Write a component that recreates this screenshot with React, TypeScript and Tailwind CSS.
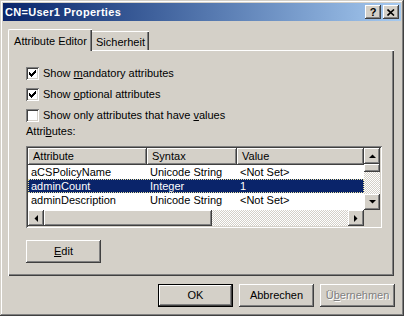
import React from 'react';

const face = 'bg-[#d4d0c8]';
const raised =
  'shadow-[inset_-1px_-1px_#404040,inset_1px_1px_#ffffff,inset_-2px_-2px_#808080,inset_2px_2px_#d4d0c8]';
const sunken =
  'shadow-[inset_1px_1px_#808080,inset_-1px_-1px_#ffffff,inset_2px_2px_#404040,inset_-2px_-2px_#d4d0c8]';
const dither = 'bg-[repeating-conic-gradient(#d4d0c8_0_25%,#ffffff_0_50%)] bg-[length:2px_2px]';

const Check = () => (
  <svg width="7" height="7" viewBox="0 0 7 7" className="block">
    <path d="M0 2h1v1h1v1h1v-1h1v-1h1v-1h1v-1h1v3h-1v1h-1v1h-1v1h-1v1h-1v-1h-1v-1h-1z" fill="#000" />
  </svg>
);

const Checkbox = ({ checked, children }: { checked: boolean; children: React.ReactNode }) => (
  <div className="flex items-center h-[13px] gap-[4px]">
    <div className={`w-[13px] h-[13px] bg-white flex items-center justify-center ${sunken}`}>
      {checked && <Check />}
    </div>
    <span className="leading-[13px]">{children}</span>
  </div>
);

const Arrow = ({ dir }: { dir: 'up' | 'down' | 'left' | 'right' }) => {
  const pts = {
    up: '0,4 3.5,0.5 7,4',
    down: '0,0 7,0 3.5,3.5',
    left: '4,0 4,7 0.5,3.5',
    right: '0,0 0,7 3.5,3.5',
  }[dir];
  const v = dir === 'up' || dir === 'down';
  return (
    <svg width={v ? 7 : 4} height={v ? 4 : 7} viewBox={v ? '0 0 7 4' : '0 0 4 7'}>
      <polygon points={pts} fill="#000" />
    </svg>
  );
};

const ScrollBtn = ({ dir }: { dir: 'up' | 'down' | 'left' | 'right' }) => (
  <div className={`w-[16px] h-[16px] shrink-0 flex items-center justify-center ${face} ${raised}`}>
    <Arrow dir={dir} />
  </div>
);

const Button = ({
  children,
  def,
  disabled,
  className = '',
}: {
  children: React.ReactNode;
  def?: boolean;
  disabled?: boolean;
  className?: string;
}) => (
  <div
    className={`w-[75px] h-[23px] flex items-center justify-center ${face} ${
      def ? 'border border-black' : ''
    } ${className}`}
  >
    <div className={`w-full h-full flex items-center justify-center ${raised}`}>
      <span className={disabled ? 'text-[#808080] [text-shadow:1px_1px_#ffffff]' : ''}>{children}</span>
    </div>
  </div>
);

const rows = [
  ['aCSPolicyName', 'Unicode String', '<Not Set>'],
  ['adminCount', 'Integer', '1'],
  ['adminDescription', 'Unicode String', '<Not Set>'],
  ['adminDisplayName', 'Unicode String', '<Not Set>'],
];

export default function App() {
  return (
    <div
      className={`w-[404px] h-[316px] ${face} p-[3px] flex flex-col text-[11px] text-black overflow-hidden shadow-[inset_-1px_-1px_#404040,inset_1px_1px_#d4d0c8,inset_-2px_-2px_#808080,inset_2px_2px_#ffffff]`}
      style={{ fontFamily: '"Liberation Sans", Arial, sans-serif' }}
    >
      {/* title bar */}
      <div className="h-[18px] flex items-center bg-gradient-to-r from-[#0a246a] to-[#a6caf0] pl-[2px] pr-[2px]">
        <span className="text-white font-bold text-[11px] tracking-[0.3px]">CN=User1 Properties</span>
        <div className="ml-auto flex gap-[2px]">
          <div className={`w-[16px] h-[14px] ${face} ${raised} flex items-center justify-center font-bold text-[11px] leading-none`}>
            ?
          </div>
          <div className={`w-[16px] h-[14px] ${face} ${raised} flex items-center justify-center`}>
            <svg width="8" height="7" viewBox="0 0 8 7">
              <path d="M0.5 0.5L7 6.5M7 0.5L0.5 6.5" stroke="#000" strokeWidth="1.6" />
            </svg>
          </div>
        </div>
      </div>

      {/* tabs */}
      <div className="mt-[7px] ml-[5px] flex items-end h-[22px] relative z-10">
        <div className="h-[22px] w-[84px] flex justify-center pt-[3px] border-l border-t border-white rounded-tl-[2px] shadow-[inset_-1px_0_#404040,inset_-2px_0_#808080] bg-[#d4d0c8] -mb-[1px]">
          Attribute Editor
        </div>
        <div className="h-[19px] w-[57px] flex justify-center pt-[2px] border-t border-white shadow-[inset_-1px_0_#404040,inset_-2px_0_#808080]">
          Sicherheit
        </div>
      </div>

      {/* tab panel */}
      <div className="ml-[5px] mr-[7px] h-[226px] flex flex-col pl-[17px] pt-[16px] border-l border-t border-white shadow-[inset_-1px_-1px_#404040,inset_-2px_-2px_#808080]">
        <div className="flex flex-col gap-[8px]">
          <Checkbox checked>
            Show <u>m</u>andatory attributes
          </Checkbox>
          <Checkbox checked>
            Show <u>o</u>ptional attributes
          </Checkbox>
          <Checkbox checked={false}>
            Show only attributes that have <u>v</u>alues
          </Checkbox>
        </div>
        <div className="mt-[3px] h-[13px] leading-[13px]">
          Attri<u>b</u>utes:
        </div>

        {/* list view */}
        <div className={`mt-[8px] w-[356px] h-[82px] bg-white p-[2px] ${sunken} flex flex-col`}>
          <div className="flex h-[62px]">
            <div className="flex-1 flex flex-col overflow-hidden">
              <div className={`flex h-[17px] shrink-0 ${face}`}>
                <div className={`w-[119px] pl-[5px] flex items-center ${raised}`}>Attribute</div>
                <div className={`w-[90px] pl-[5px] flex items-center ${raised}`}>Syntax</div>
                <div className={`flex-1 pl-[5px] flex items-center ${raised}`}>Value</div>
              </div>
              {rows.map((r, i) => {
                const sel = i === 1;
                return (
                  <div
                    key={r[0]}
                    className={`flex h-[14px] shrink-0 items-center ${
                      sel
                        ? 'bg-[#0a246a] text-white outline-1 outline-dotted outline-[#e8e0a0] -outline-offset-1'
                        : ''
                    }`}
                  >
                    <div className="w-[119px] pl-[3px] whitespace-nowrap">{r[0]}</div>
                    <div className="w-[90px] pl-[3px] whitespace-nowrap">{r[1]}</div>
                    <div className="flex-1 pl-[3px] whitespace-nowrap">{r[2]}</div>
                  </div>
                );
              })}
            </div>
            <div className={`w-[16px] flex flex-col ${dither}`}>
              <ScrollBtn dir="up" />
              <div className={`h-[8px] ${face} ${raised}`} />
              <div className="flex-1" />
              <ScrollBtn dir="down" />
            </div>
          </div>
          <div className="flex h-[16px]">
            <div className={`flex flex-1 ${dither}`}>
              <ScrollBtn dir="left" />
              <div className={`w-[168px] ${face} ${raised}`} />
              <div className="flex-1" />
              <ScrollBtn dir="right" />
            </div>
            <div className={`w-[16px] ${face}`} />
          </div>
        </div>

        <Button className="mt-[12px] w-[75px]">
          <u>E</u>dit
        </Button>
      </div>

      {/* dialog buttons */}
      <div className="mt-[8px] flex justify-end gap-[6px] pr-[6px]">
        <Button def>OK</Button>
        <Button>Abbrechen</Button>
        <Button disabled>
          Ü<u>b</u>ernehmen
        </Button>
      </div>
    </div>
  );
}
